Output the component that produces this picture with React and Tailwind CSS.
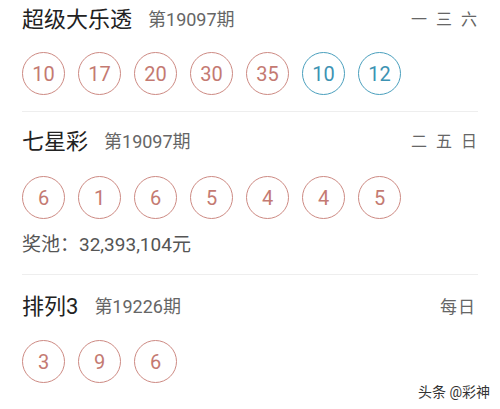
import React from 'react';

const font = { fontFamily: 'Roboto, "Noto Sans CJK SC", "Noto Sans", sans-serif' };

const Ball = ({ n, blue }) => (
  <div
    className={`w-[43px] h-[43px] rounded-full border-[1.5px] flex items-center justify-center text-[20px] ${
      blue ? 'border-[#4a9fbd] text-[#3d93b3]' : 'border-[#cd8a83] text-[#c47a72]'
    }`}
  >
    {n}
  </div>
);

const Header = ({ name, issue, days, spaced }) => (
  <div className="flex items-center h-[24px]">
    <span className="text-[22px] text-[#222] leading-none">{name}</span>
    <span className="text-[18px] text-[#666] leading-none ml-[16px]">{issue}</span>
    <span
      className={`ml-auto text-[16px] text-[#666] leading-none ${
        spaced ? 'tracking-[9px] mr-[-8px]' : 'tracking-[1px] mr-[2px] text-[17px]'
      }`}
    >
      {days}
    </span>
  </div>
);

export default function App() {
  return (
    <div className="w-[500px] h-[409px] bg-white relative overflow-hidden" style={font}>
      <div className="px-[22px]">
        <section className="pt-[8px] pb-[16px] border-b border-[#eeeeee]">
          <Header name="超级大乐透" issue="第19097期" days="一三六" spaced />
          <div className="flex gap-[13px] mt-[20px]">
            {['10', '17', '20', '30', '35'].map((n, i) => (
              <Ball key={i} n={n} />
            ))}
            <Ball n="10" blue />
            <Ball n="12" blue />
          </div>
        </section>
        <section className="pt-[18px] pb-[20px] border-b border-[#eeeeee]">
          <Header name="七星彩" issue="第19097期" days="二五日" spaced />
          <div className="flex gap-[13px] mt-[22px]">
            {['6', '1', '6', '5', '4', '4', '5'].map((n, i) => (
              <Ball key={i} n={n} />
            ))}
          </div>
          <div className="mt-[16px] text-[19px] text-[#555] leading-none">奖池：32,393,104元</div>
        </section>
        <section className="pt-[20px]">
          <Header name="排列3" issue="第19226期" days="每日" />
          <div className="flex gap-[13px] mt-[21px]">
            {['3', '9', '6'].map((n, i) => (
              <Ball key={i} n={n} />
            ))}
          </div>
        </section>
      </div>
      <div
        className="absolute right-[10px] bottom-[10px] text-[14px] text-[#333] leading-none"
        style={{ textShadow: '0 0 2px #fff, 0 0 2px #fff' }}
      >
        头条 @彩神
      </div>
    </div>
  );
}
